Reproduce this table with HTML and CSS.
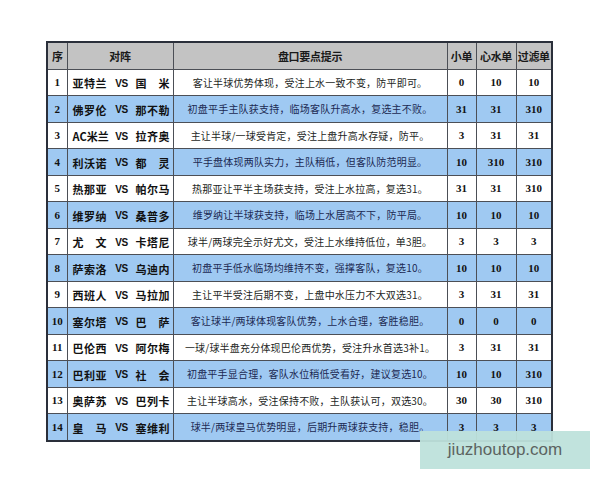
FILE: index.html
```html
<!DOCTYPE html>
<html lang="zh">
<head>
<meta charset="utf-8">
<title>盘口要点提示</title>
<link rel="stylesheet" href="styles.css">
</head>
<body>
<div class="page">
<table class="tips">
<colgroup>
<col class="c-no"><col class="c-match"><col class="c-tip"><col class="c-a"><col class="c-b"><col class="c-c">
</colgroup>
<thead>
<tr><th>序</th><th>对阵</th><th>盘口要点提示</th><th>小单</th><th>心水单</th><th>过滤单</th></tr>
</thead>
<tbody>
<tr><td class="no">1</td><td class="match"><span class="t">亚特兰</span><span class="vs">VS</span><span class="t">国　米</span></td><td class="tip">客让半球优势体现，受注上水一致不变，防平即可。</td><td class="n">0</td><td class="n">10</td><td class="n">10</td></tr>
<tr class="blue"><td class="no">2</td><td class="match"><span class="t">佛罗伦</span><span class="vs">VS</span><span class="t">那不勒</span></td><td class="tip">初盘平手主队获支持，临场客队升高水，复选主不败。</td><td class="n">31</td><td class="n">31</td><td class="n">310</td></tr>
<tr><td class="no">3</td><td class="match"><span class="t">AC米兰</span><span class="vs">VS</span><span class="t">拉齐奥</span></td><td class="tip">主让半球/一球受肯定，受注上盘升高水存疑，防平。</td><td class="n">3</td><td class="n">31</td><td class="n">31</td></tr>
<tr class="blue"><td class="no">4</td><td class="match"><span class="t">利沃诺</span><span class="vs">VS</span><span class="t">都　灵</span></td><td class="tip">平手盘体现两队实力，主队稍低，但客队防范明显。</td><td class="n">10</td><td class="n">310</td><td class="n">310</td></tr>
<tr><td class="no">5</td><td class="match"><span class="t">热那亚</span><span class="vs">VS</span><span class="t">帕尔马</span></td><td class="tip">热那亚让平半主场获支持，受注上水拉高，复选31。</td><td class="n">31</td><td class="n">31</td><td class="n">310</td></tr>
<tr class="blue"><td class="no">6</td><td class="match"><span class="t">维罗纳</span><span class="vs">VS</span><span class="t">桑普多</span></td><td class="tip">维罗纳让半球获支持，临场上水居高不下，防平局。</td><td class="n">10</td><td class="n">10</td><td class="n">10</td></tr>
<tr><td class="no">7</td><td class="match"><span class="t">尤　文</span><span class="vs">VS</span><span class="t">卡塔尼</span></td><td class="tip">球半/两球完全示好尤文，受注上水维持低位，单3胆。</td><td class="n">3</td><td class="n">3</td><td class="n">3</td></tr>
<tr class="blue"><td class="no">8</td><td class="match"><span class="t">萨索洛</span><span class="vs">VS</span><span class="t">乌迪内</span></td><td class="tip">初盘平手低水临场均维持不变，强撑客队，复选10。</td><td class="n">10</td><td class="n">10</td><td class="n">10</td></tr>
<tr><td class="no">9</td><td class="match"><span class="t">西班人</span><span class="vs">VS</span><span class="t">马拉加</span></td><td class="tip">主让平半受注后期不变，上盘中水压力不大双选31。</td><td class="n">3</td><td class="n">31</td><td class="n">31</td></tr>
<tr class="blue"><td class="no">10</td><td class="match"><span class="t">塞尔塔</span><span class="vs">VS</span><span class="t">巴　萨</span></td><td class="tip">客让球半/两球体现客队优势，上水合理，客胜稳胆。</td><td class="n">0</td><td class="n">0</td><td class="n">0</td></tr>
<tr><td class="no">11</td><td class="match"><span class="t">巴伦西</span><span class="vs">VS</span><span class="t">阿尔梅</span></td><td class="tip">一球/球半盘充分体现巴伦西优势，受注升水首选3补1。</td><td class="n">3</td><td class="n">31</td><td class="n">31</td></tr>
<tr class="blue"><td class="no">12</td><td class="match"><span class="t">巴利亚</span><span class="vs">VS</span><span class="t">社　会</span></td><td class="tip">初盘平手显合理，客队水位稍低受看好，建议复选10。</td><td class="n">10</td><td class="n">10</td><td class="n">310</td></tr>
<tr><td class="no">13</td><td class="match"><span class="t">奥萨苏</span><span class="vs">VS</span><span class="t">巴列卡</span></td><td class="tip">主让半球高水，受注保持不败，主队获认可，双选30。</td><td class="n">30</td><td class="n">30</td><td class="n">310</td></tr>
<tr class="blue"><td class="no">14</td><td class="match"><span class="t">皇　马</span><span class="vs">VS</span><span class="t">塞维利</span></td><td class="tip">球半/两球皇马优势明显，后期升两球获支持，稳胆。</td><td class="n">3</td><td class="n">3</td><td class="n">3</td></tr>
</tbody>
</table>
<div class="watermark">jiuzhoutop.com</div>
</div>
</body>
</html>
```

FILE: styles.css
```css
html, body {
  margin: 0;
  padding: 0;
  background: #ffffff;
}

.page {
  position: relative;
  width: 600px;
  height: 480px;
  padding: 41px 0 0 46px;
  box-sizing: border-box;
}

.tips {
  border-collapse: collapse;
  table-layout: fixed;
  width: 505px;
  border: 2px solid #2a2f3a;
  font-family: "Noto Sans CJK SC", "Liberation Serif", serif;
  color: #111;
}

.c-no { width: 20px; }
.c-match { width: 106px; }
.c-tip { width: 274px; }
.c-a { width: 29px; }
.c-b { width: 40px; }
.c-c { width: 36px; }

.tips th,
.tips td {
  border: 1px solid #4c4f56;
  padding: 0;
  height: 25.5px;
  text-align: center;
  vertical-align: middle;
  white-space: nowrap;
  overflow: hidden;
}

.tips th {
  background: #c3c3c3;
  font-size: 11px;
  font-weight: 700;
  color: #1a1a1a;
  letter-spacing: -0.3px;
}

.tips tr.blue td {
  background: #9fc9f2;
}

.no {
  font-family: "Liberation Serif", "DejaVu Serif", serif;
  font-weight: 700;
  font-size: 11px;
}

.tips td.match {
  font-size: 11px;
  font-weight: 700;
  text-align: left;
  padding: 0 6px 0 5px;
}

.match .t,
.match .vs {
  display: inline-block;
  vertical-align: middle;
}

.match .t {
  width: 34px;
  text-align: justify;
  text-align-last: justify;
}

.match .vs {
  width: 26px;
  font-family: "Liberation Sans", Arial, sans-serif;
  font-size: 10px;
  font-weight: 700;
  letter-spacing: -0.3px;
  text-align: center;
  margin: 0 1px 0 2px;
}

.tip {
  font-size: 10px;
  font-weight: 400;
  letter-spacing: 0.2px;
  color: #1d1f24;
}

.blue .tip {
  color: #1c2a52;
}

.n {
  font-family: "Liberation Serif", "DejaVu Serif", serif;
  font-weight: 700;
  font-size: 11px;
}

.watermark {
  position: absolute;
  left: 420px;
  top: 431px;
  width: 170px;
  height: 38px;
  background: rgba(190, 226, 219, 0.95);
  color: #5c6361;
  font-family: "Liberation Sans", Arial, sans-serif;
  font-size: 17px;
  line-height: 38px;
  text-align: center;
}
```
